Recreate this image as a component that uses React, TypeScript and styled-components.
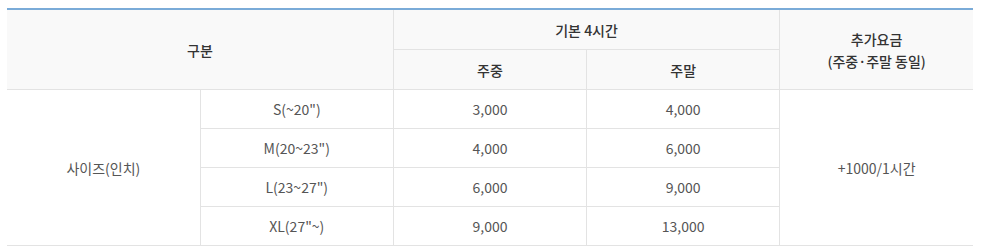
import { createGlobalStyle } from "styled-components";
import styled from "styled-components";

const GlobalStyle = createGlobalStyle`
  html, body {
    margin: 0;
    padding: 0;
    background: #fff;
  }
  body {
    font-family: "Noto Sans CJK KR", "Noto Sans", sans-serif;
  }
`;

interface SizeRow {
  label: string;
  weekday: string;
  weekend: string;
}

const ROWS: SizeRow[] = [
  { label: 'S(~20")', weekday: "3,000", weekend: "4,000" },
  { label: 'M(20~23")', weekday: "4,000", weekend: "6,000" },
  { label: 'L(23~27")', weekday: "6,000", weekend: "9,000" },
  { label: 'XL(27"~)', weekday: "9,000", weekend: "13,000" },
];

export default function App() {
  return (
    <>
      <GlobalStyle />
      <Wrap>
        <PriceTable>
          <colgroup>
            <col style={{ width: "20%" }} />
            <col style={{ width: "20%" }} />
            <col style={{ width: "20%" }} />
            <col style={{ width: "20%" }} />
            <col style={{ width: "20%" }} />
          </colgroup>
          <thead>
            <tr>
              <HeadCell colSpan={2} rowSpan={2}>구분</HeadCell>
              <HeadCell colSpan={2} $h={39}>기본 4시간</HeadCell>
              <HeadCell rowSpan={2} $last>
                추가요금
                <br />
                (주중·주말 동일)
              </HeadCell>
            </tr>
            <tr>
              <HeadCell $h={39}>주중</HeadCell>
              <HeadCell $h={39}>주말</HeadCell>
            </tr>
          </thead>
          <tbody>
            {ROWS.map((row, i) => (
              <tr key={row.label}>
                {i === 0 && (
                  <BodyCell rowSpan={ROWS.length} $first>
                    사이즈(인치)
                  </BodyCell>
                )}
                <BodyCell>{row.label}</BodyCell>
                <BodyCell>{row.weekday}</BodyCell>
                <BodyCell>{row.weekend}</BodyCell>
                {i === 0 && (
                  <BodyCell rowSpan={ROWS.length} $last>
                    +1000/1시간
                  </BodyCell>
                )}
              </tr>
            ))}
          </tbody>
        </PriceTable>
      </Wrap>
    </>
  );
}

const Wrap = styled.div`
  padding: 8px 8px 0 7px;
`;

const PriceTable = styled.table`
  width: 966px;
  border-collapse: collapse;
  table-layout: fixed;
  border-top: 2px solid #7aabd8;
  font-size: 14px;
  line-height: 22px;
  text-align: center;
`;

const HeadCell = styled.th<{ $last?: boolean; $h?: number }>`
  height: ${(p) => (p.$h ? `${p.$h}px` : "auto")};
  padding: 0;
  background: #f9f9f9;
  color: #333;
  font-weight: 500;
  border: 1px solid #e3e3e3;
  border-top: none;

  &:first-child {
    border-left: none;
  }

  ${(p) => (p.$last ? "border-right: none;" : "")}
`;

const BodyCell = styled.td<{ $first?: boolean; $last?: boolean }>`
  height: 38px;
  padding: 0;
  color: #555;
  font-weight: 400;
  border: 1px solid #e3e3e3;

  ${(p) => (p.$first ? "border-left: none;" : "")}
  ${(p) => (p.$last ? "border-right: none;" : "")}
`;
